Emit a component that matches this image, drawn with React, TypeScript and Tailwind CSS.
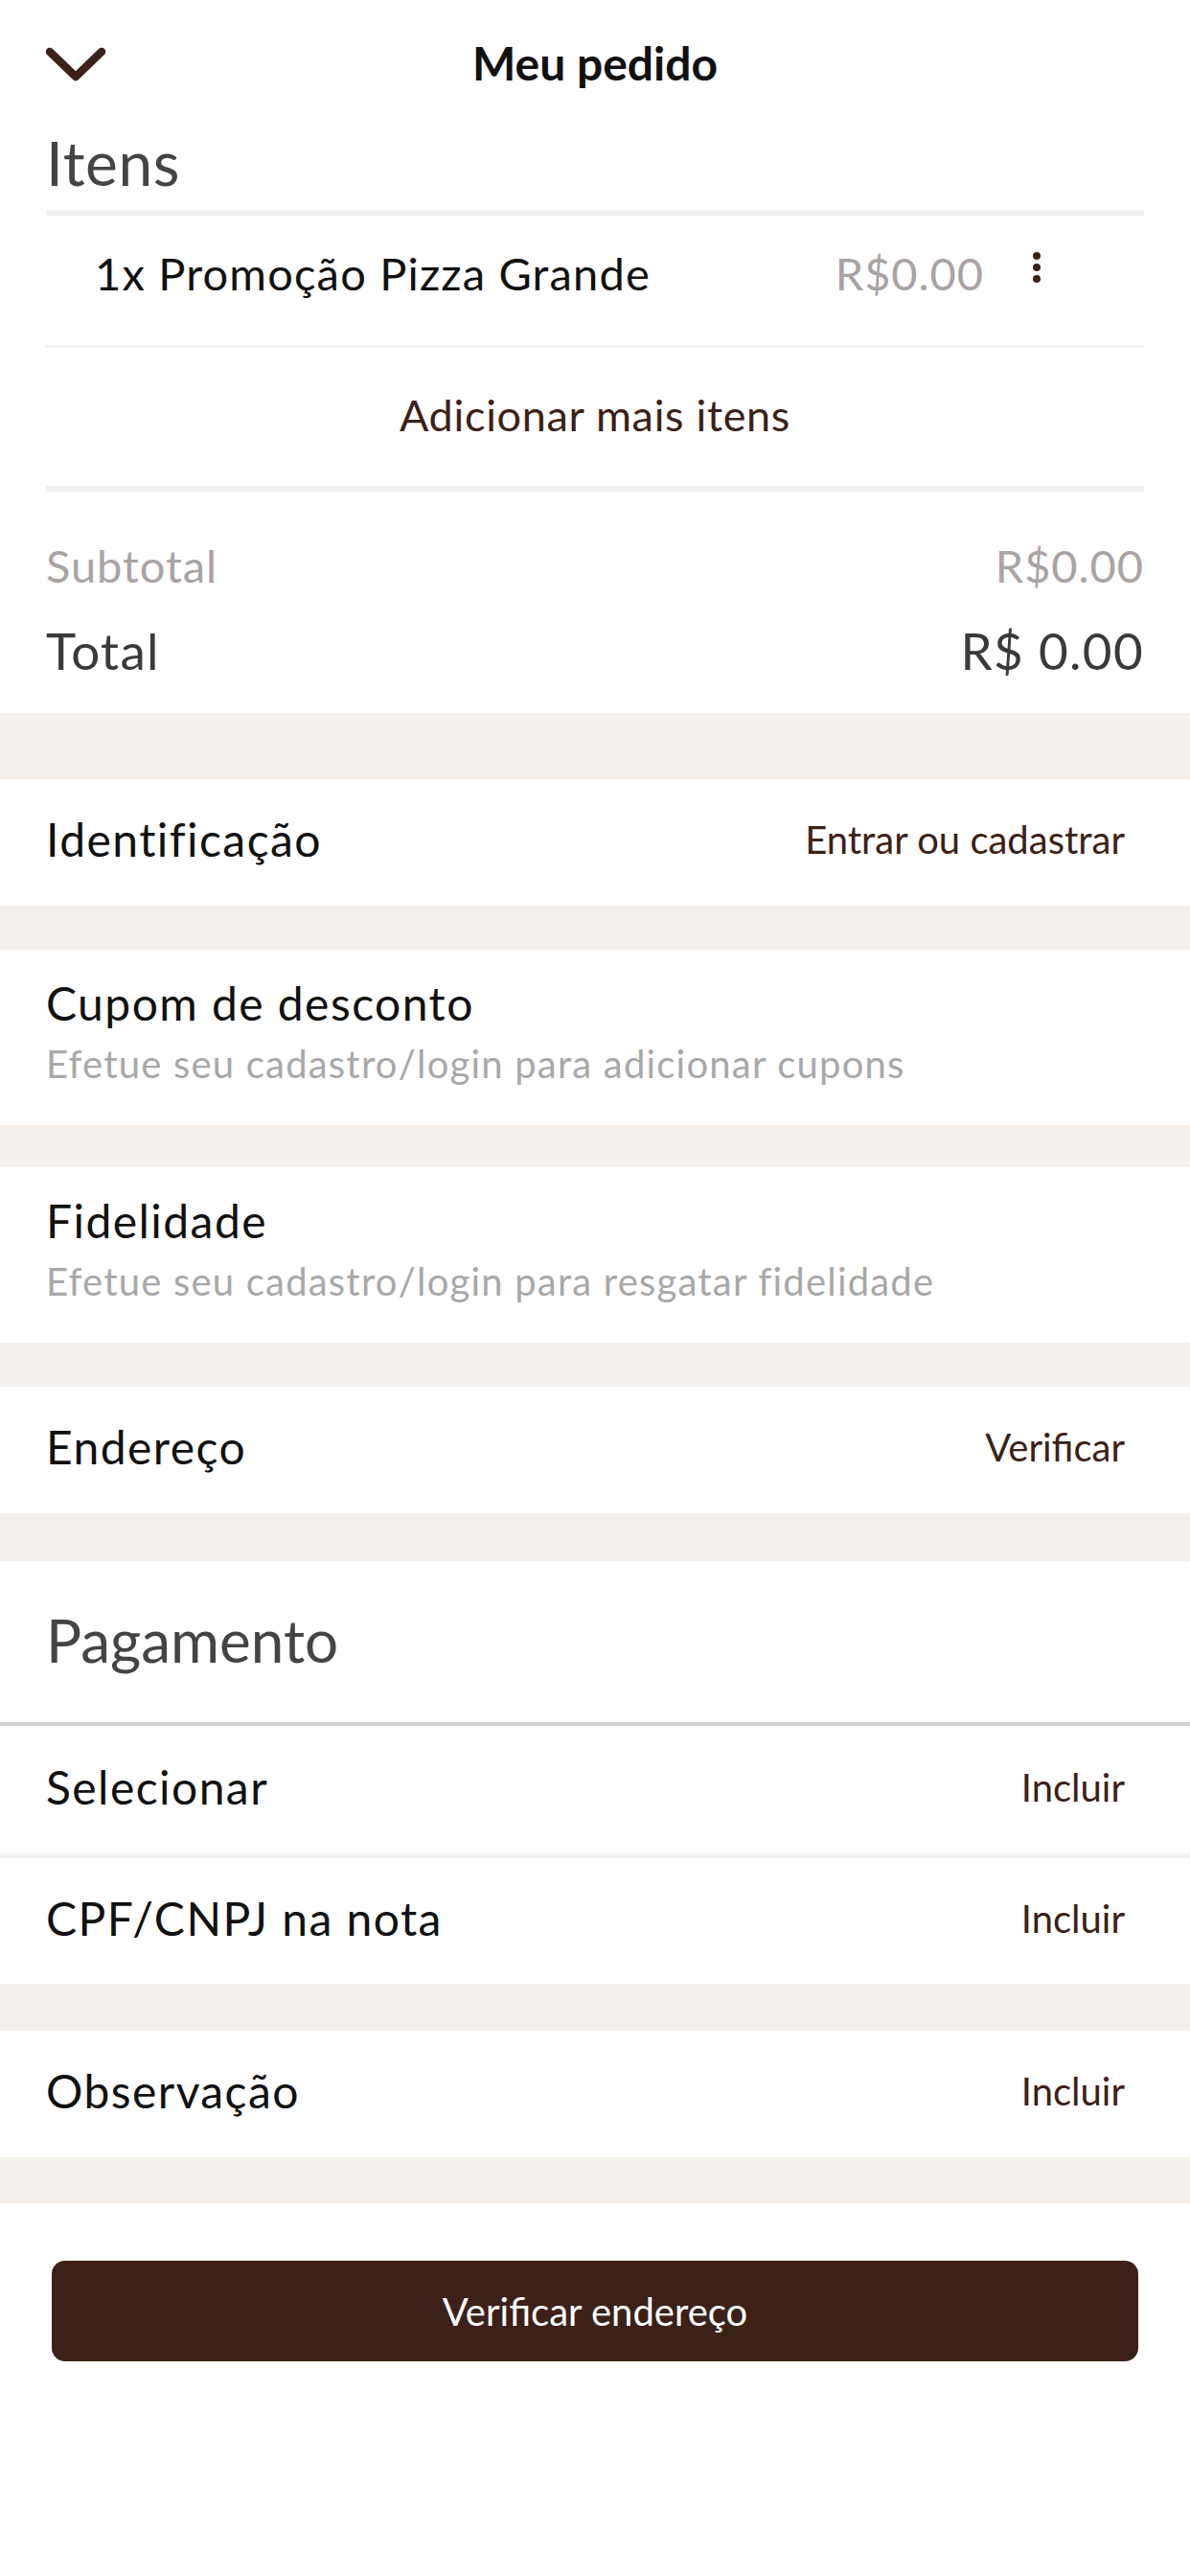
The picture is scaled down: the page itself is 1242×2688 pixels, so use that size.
import React from "react";

// ── Colours ──────────────────────────────────────────────────────────────────
// brown   #3c2118  (actions, chevron, button)
// beige   #f5f0ec  (section gaps)
// muted   #a9a3a3  (prices, subtotal)

const font = { fontFamily: "Lato, 'Open Sans', sans-serif" };

function Gap({ h }: { h: string }) {
  return <div className={`${h} bg-[#f5f0ec]`} />;
}

function ActionRow({ label, action, h = "h-[132px]" }: { label: string; action: string; h?: string }) {
  return (
    <div className={`${h} flex items-center justify-between pl-[48px] pr-[68px] pb-[6px] bg-white`}>
      <span className="text-[48px] leading-none tracking-[0.03em] text-[#111]">{label}</span>
      <span className="text-[40px] leading-none text-[#3c2118]">{action}</span>
    </div>
  );
}

function InfoRow({ title, note }: { title: string; note: string }) {
  return (
    <div className="h-[183px] flex flex-col pl-[48px] pt-[32px] bg-white">
      <span className="text-[48px] leading-none tracking-[0.03em] text-[#111]">{title}</span>
      <span className="mt-[19px] text-[40px] leading-none tracking-[0.03em] text-[#a8a8a8]">{note}</span>
    </div>
  );
}

export default function App() {
  return (
    <div className="w-[1242px] min-h-[2688px] bg-white" style={font}>
      {/* Header */}
      <div className="relative h-[132px] flex items-center justify-center">
        <svg
          className="absolute left-[44px] top-[46px]"
          width="70"
          height="42"
          viewBox="0 0 70 42"
          fill="none"
        >
          <path d="M8 8 L35 34 L62 8" stroke="#3c2118" strokeWidth="8.5" strokeLinecap="round" strokeLinejoin="round" />
        </svg>
        <h1 className="text-[48px] font-bold text-[#111] leading-none">Meu pedido</h1>
      </div>

      {/* Itens */}
      <div className="h-[87px] flex items-center pb-[12px] px-[48px]">
        <h2 className="text-[64px] leading-none tracking-[0.01em] text-[#444]">Itens</h2>
      </div>
      <div className="mx-[48px] h-[6px] bg-[#f2f2f2]" />

      <div className="mx-[48px] h-[135px] flex items-center pb-[14px] pl-[51px]">
        <span className="flex-1 text-[47px] leading-none tracking-[0.025em] text-[#111]">1x Promoção Pizza Grande</span>
        <span className="text-[47px] leading-none tracking-[0.02em] text-[#a9a3a3]">R$0.00</span>
        <div className="ml-[40px] mr-[97px] w-[30px] flex flex-col items-center gap-[4px] -mt-[14px]">
          <span className="w-[8px] h-[8px] rounded-full bg-[#3c2118]" />
          <span className="w-[8px] h-[8px] rounded-full bg-[#3c2118]" />
          <span className="w-[8px] h-[8px] rounded-full bg-[#3c2118]" />
        </div>
      </div>
      <div className="mx-[48px] h-[3px] bg-[#f2f2f2]" />

      <div className="h-[144px] flex items-center justify-center pb-[4px]">
        <span className="text-[45px] leading-none tracking-[0.015em] text-[#3c2118]">Adicionar mais itens</span>
      </div>
      <div className="mx-[48px] h-[6px] bg-[#f2f2f2]" />

      {/* Totals */}
      <div className="px-[48px] pt-[47px] pb-[34px] flex flex-col gap-[26px]">
        <div className="h-[60px] flex items-center justify-between text-[47px] leading-none tracking-[0.02em] text-[#aaa3a3]">
          <span>Subtotal</span>
          <span>R$0.00</span>
        </div>
        <div className="h-[64px] flex items-center justify-between text-[53px] leading-none tracking-[0.025em] text-[#3a3a3a]">
          <span>Total</span>
          <span>R$ 0.00</span>
        </div>
      </div>

      <Gap h="h-[69px]" />
      <ActionRow label="Identificação" action="Entrar ou cadastrar" />
      <Gap h="h-[46px]" />
      <InfoRow title="Cupom de desconto" note="Efetue seu cadastro/login para adicionar cupons" />
      <Gap h="h-[44px]" />
      <InfoRow title="Fidelidade" note="Efetue seu cadastro/login para resgatar fidelidade" />
      <Gap h="h-[46px]" />
      <ActionRow label="Endereço" action="Verificar" />
      <Gap h="h-[50px]" />

      {/* Pagamento */}
      <div className="h-[168px] flex items-center pl-[48px] pb-[4px]">
        <h2 className="text-[62px] leading-none text-[#444]">Pagamento</h2>
      </div>
      <div className="h-[4px] bg-[#d0d0d0]" />
      <ActionRow label="Selecionar" action="Incluir" h="h-[133px]" />
      <div className="h-[5px] bg-[#f2f2f2]" />
      <ActionRow label="CPF/CNPJ na nota" action="Incluir" h="h-[131px]" />
      <Gap h="h-[49px]" />
      <ActionRow label="Observação" action="Incluir" />
      <Gap h="h-[48px]" />

      <div className="pt-[60px] px-[54px]">
        <button className="w-full h-[105px] rounded-[14px] bg-[#3c2118] text-white text-[40px] leading-none">
          Verificar endereço
        </button>
      </div>
    </div>
  );
}
